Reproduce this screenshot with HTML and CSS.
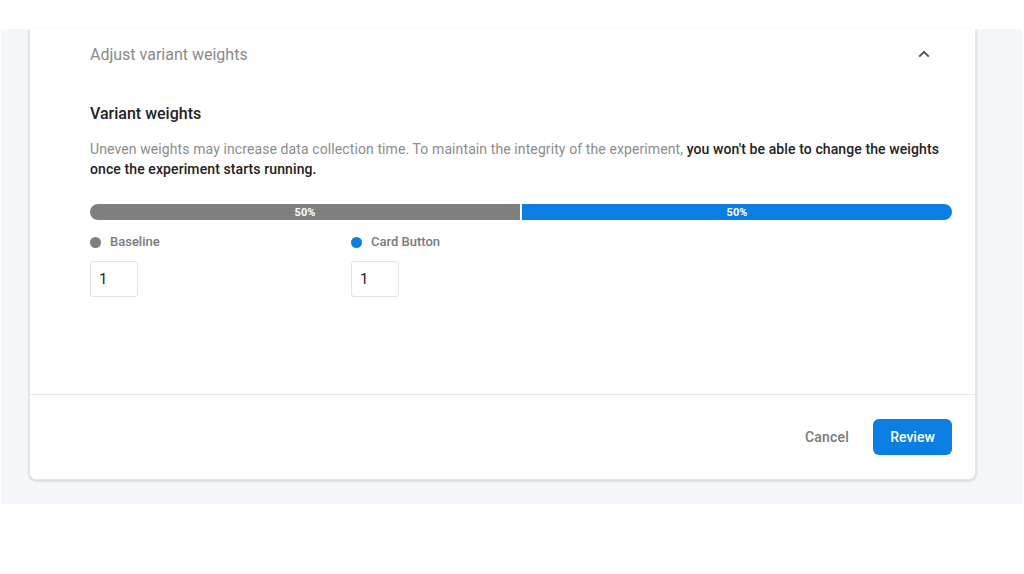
FILE: index.html
```html
<!DOCTYPE html>
<html lang="en">
<head>
<meta charset="utf-8">
<title>Adjust variant weights</title>
<link rel="stylesheet" href="styles.css">
</head>
<body>
<div class="top"></div>
<div class="panel">
  <div class="card">
    <div class="header">
      <span class="header-title">Adjust variant weights</span>
      <svg class="chevron" width="12" height="8" viewBox="0 0 12 8"><path d="M1.2 6.6 L6 1.8 L10.8 6.6" fill="none" stroke="#555" stroke-width="2"/></svg>
    </div>
    <div class="body">
      <h2 class="section-title">Variant weights</h2>
      <p class="desc">Uneven weights may increase data collection time. To maintain the integrity of the experiment, <strong>you won't be able to change the weights once the experiment starts running.</strong></p>
      <div class="bar">
        <div class="seg seg-gray">50%</div>
        <div class="seg seg-blue">50%</div>
      </div>
      <div class="variants">
        <div class="variant">
          <div class="legend"><span class="dot dot-gray"></span>Baseline</div>
          <input class="weight" type="text" value="1">
        </div>
        <div class="variant">
          <div class="legend"><span class="dot dot-blue"></span>Card Button</div>
          <input class="weight" type="text" value="1">
        </div>
      </div>
    </div>
    <div class="footer">
      <button class="btn-cancel">Cancel</button>
      <button class="btn-review">Review</button>
    </div>
  </div>
</div>
</body>
</html>
```

FILE: styles.css
```css
* { box-sizing: border-box; }
html, body {
  margin: 0;
  background: #ffffff;
  font-family: Roboto, "Liberation Sans", Arial, sans-serif;
}
.top { height: 29px; }
.panel {
  background: #f5f7fa;
  margin: 0 2px 0 1px;
  padding: 0 46px 24px 28px;
}
.card {
  background: #ffffff;
  border: 1px solid #e4e6e9;
  border-top: none;
  border-radius: 0 0 7px 7px;
  box-shadow: 0 1px 3px rgba(0, 0, 0, 0.18);
}
.header {
  height: 50px;
  display: flex;
  align-items: center;
  justify-content: space-between;
  padding: 0 45px 0 60px;
}
.header-title {
  font-size: 16px;
  color: #8a8a8a;
}
.chevron { display: block; }
.body {
  padding: 25px 23px 97px 60px;
  border-bottom: 1px solid #e8e8e8;
}
.section-title {
  margin: 0;
  font-size: 16px;
  line-height: 20px;
  font-weight: 500;
  color: #222;
}
.desc {
  margin: 15px 0 0;
  font-size: 14px;
  line-height: 20px;
  letter-spacing: 0.1px;
  color: #8c8c8c;
}
.desc strong {
  font-weight: 500;
  color: #222;
}
.bar {
  margin-top: 25px;
  display: flex;
  gap: 2px;
  height: 16px;
}
.seg {
  flex: 1;
  display: flex;
  align-items: center;
  justify-content: center;
  font-size: 11px;
  font-weight: 700;
  color: #fff;
}
.seg-gray { background: #7f7f7f; border-radius: 8px 0 0 8px; }
.seg-blue { background: #0b7ee2; border-radius: 0 8px 8px 0; }
.variants {
  display: flex;
  margin-top: 13px;
}
.variant { width: 261px; }
.legend {
  display: flex;
  align-items: center;
  gap: 9px;
  font-size: 13px;
  line-height: 18px;
  font-weight: 500;
  color: #7a7a7a;
}
.dot {
  width: 11px;
  height: 11px;
  border-radius: 50%;
}
.dot-gray { background: #7f7f7f; }
.dot-blue { background: #0b7ee2; }
.weight {
  display: block;
  margin-top: 10px;
  width: 48px;
  height: 36px;
  border: 1px solid #e3e3e3;
  border-radius: 3px;
  padding: 0 8px;
  font-family: inherit;
  font-size: 15px;
  color: #222;
  background: #fff;
  outline: none;
}
.footer {
  height: 84px;
  display: flex;
  align-items: center;
  justify-content: flex-end;
  gap: 24px;
  padding-right: 23px;
}
.btn-cancel {
  border: none;
  background: none;
  padding: 0;
  font-family: inherit;
  font-size: 14px;
  font-weight: 500;
  letter-spacing: 0.2px;
  color: #7a7a7a;
}
.btn-review {
  width: 79px;
  height: 36px;
  border: none;
  border-radius: 6px;
  background: #0b7ee2;
  color: #fff;
  font-family: inherit;
  font-size: 14px;
  font-weight: 500;
}
```
